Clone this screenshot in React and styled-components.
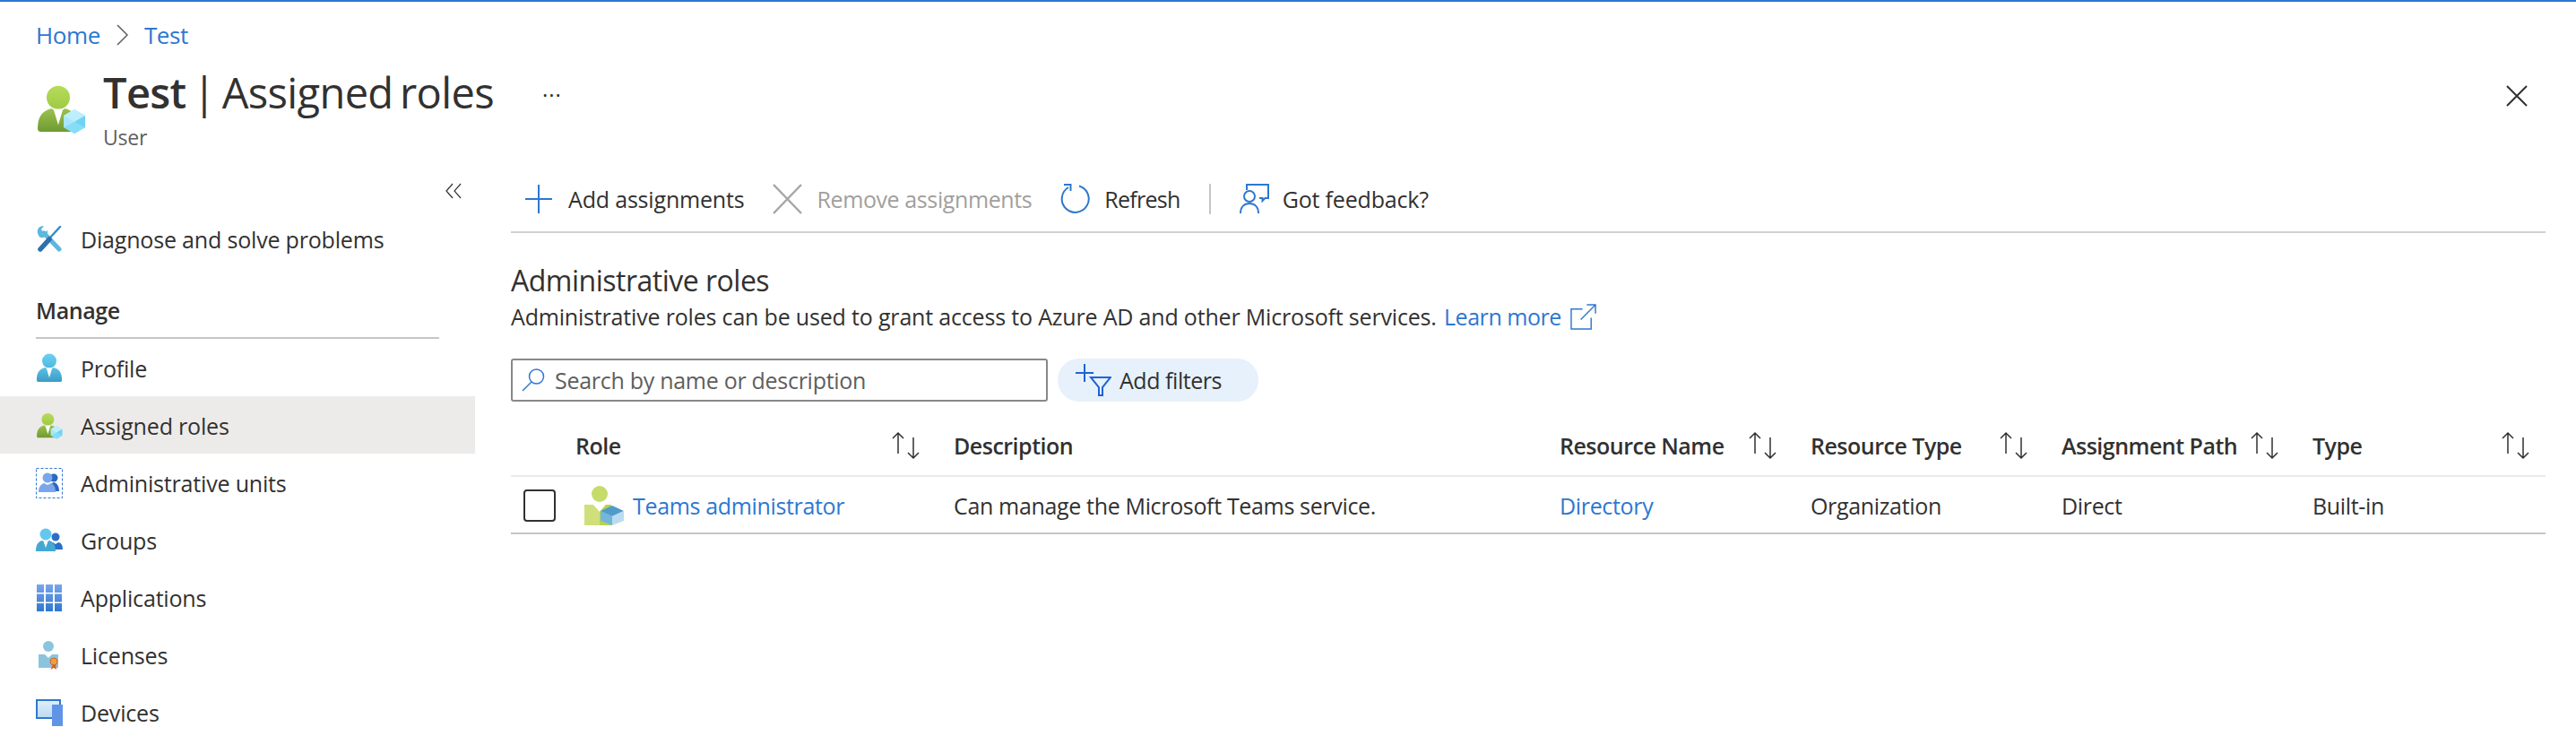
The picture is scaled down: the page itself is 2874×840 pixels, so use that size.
import styled, { createGlobalStyle } from "styled-components";

const GlobalStyle = createGlobalStyle`
  html, body {
    margin: 0;
    padding: 0;
    background: #fff;
    color: #323130;
    font-family: "Open Sans", "Noto Sans", sans-serif;
    font-size: 25px;
    letter-spacing: -0.18px;
  }
`;

const BLUE = "#2e77d0";

const Page = styled.div`
  width: 2874px;
  height: 840px;
  overflow: hidden;
  border-top: 2px solid ${BLUE};
  box-sizing: border-box;
`;

const Header = styled.header`
  height: 188px;
  padding: 0 54px 0 40px;
  box-sizing: border-box;
`;

const Breadcrumb = styled.nav`
  height: 74px;
  display: flex;
  align-items: center;
  gap: 18px;
`;

const Crumb = styled.a`
  color: ${BLUE};
  font-size: 26px;
  letter-spacing: -0.4px;
`;

const TitleRow = styled.div`
  display: flex;
  align-items: flex-start;
`;

const TitleIcon = styled.div`
  width: 75px;
  height: 56px;
  margin-top: 19px;
  flex: none;
`;

const TitleBlock = styled.div`
  display: flex;
  flex-direction: column;
  margin-top: -2px;
`;

const Title = styled.h1`
  margin: 0;
  font-size: 47px;
  line-height: 58px;
  font-weight: 400;
  letter-spacing: -0.65px;
  word-spacing: -4px;
  b {
    font-weight: 600;
  }
`;

const Subtitle = styled.div`
  font-size: 23px;
  line-height: 34px;
  color: #605e5c;
  margin-top: 4px;
`;

const More = styled.div`
  margin: 0 0 0 54px;
  line-height: 60px;
  font-size: 24px;
  color: #323130;
  letter-spacing: 1px;
`;

const Close = styled.div`
  margin-left: auto;
  margin-top: 16px;
`;

const Body = styled.div`
  display: flex;
  align-items: flex-start;
`;

const Sidebar = styled.aside`
  width: 530px;
  flex: none;
`;

const Collapse = styled.div`
  height: 45px;
  display: flex;
  justify-content: flex-end;
  align-items: center;
  padding-right: 15px;
`;

const NavRow = styled.div`
  height: 64px;
  box-sizing: border-box;
  display: flex;
  align-items: center;
  gap: 20px;
  padding: ${(p) => (p.$managed ? "2px" : "0")} 0 0 40px;
  background: ${(p) => (p.$active ? "#edebe9" : "transparent")};
`;

const NavIcon = styled.span`
  width: 30px;
  height: 34px;
  flex: none;
  display: flex;
  align-items: center;
  justify-content: center;
`;

const SectionHead = styled.div`
  margin: 17px 40px 0;
  height: 62px;
  line-height: 60px;
  font-weight: 600;
  letter-spacing: -0.4px;
  box-sizing: border-box;
  border-bottom: 2px solid #c8c6c4;
`;

const Main = styled.main`
  flex: 1;
  padding: 0 34px 0 40px;
  min-width: 0;
`;

const Toolbar = styled.div`
  height: 70px;
  box-sizing: border-box;
  padding: 0 0 5px 16px;
  border-bottom: 2px solid #d2d0ce;
  display: flex;
  align-items: center;
  gap: 32px;
`;

const ToolButton = styled.div`
  display: flex;
  align-items: center;
  gap: ${(p) => p.$gap || 16}px;
  letter-spacing: ${(p) => p.$track || -0.18}px;
  color: ${(p) => (p.$disabled ? "#a19f9d" : "#323130")};
`;

const ToolSep = styled.div`
  width: 2px;
  height: 34px;
  background: #c8c6c4;
`;

const RoleTitle = styled.h2`
  margin: 31px 0 0;
  font-size: 32px;
  line-height: 44px;
  font-weight: 400;
  letter-spacing: -0.5px;
`;

const RoleDesc = styled.p`
  margin: 0;
  line-height: 36px;
  display: flex;
  align-items: center;
  gap: 10px;
`;

const Link = styled.a`
  color: ${BLUE};
`;

const LearnMore = styled(Link)`
  letter-spacing: -0.45px;
  margin-left: 2px;
`;

const FilterRow = styled.div`
  margin-top: 29px;
  display: flex;
  align-items: stretch;
  gap: 11px;
  height: 48px;
`;

const SearchBox = styled.div`
  width: 599px;
  box-sizing: border-box;
  border: 2px solid #8a8886;
  border-radius: 3px;
  display: flex;
  align-items: center;
  gap: 11px;
  padding-left: 10px;
  color: #605e5c;
  letter-spacing: -0.28px;
`;

const FilterPill = styled.div`
  width: 224px;
  box-sizing: border-box;
  background: #e6f1fb;
  border-radius: 24px;
  display: flex;
  align-items: center;
  gap: 9px;
  padding-left: 20px;
  letter-spacing: -0.45px;
`;

const TableGrid = styled.div`
  margin-top: 16px;
  display: grid;
  grid-template-columns: 72px 422px 676px 280px 280px 280px 260px;
`;

const HeadCell = styled.div`
  height: 68px;
  box-sizing: border-box;
  border-bottom: 2px solid #edebe9;
  display: flex;
  align-items: center;
  justify-content: space-between;
  padding-right: ${(p) => (p.$last ? "16px" : "36px")};
  font-weight: 600;
  letter-spacing: -0.5px;
`;

const Cell = styled.div`
  height: 64px;
  box-sizing: border-box;
  border-bottom: 2px solid #c8c6c4;
  display: flex;
  align-items: center;
  gap: 10px;
  padding-left: ${(p) => p.$pad || 0}px;
  padding-top: 2px;
  letter-spacing: -0.34px;
`;

const Checkbox = styled.span`
  width: 36px;
  height: 36px;
  box-sizing: border-box;
  border: 2px solid #323130;
  border-radius: 4px;
`;

const SortIcon = () => (
  <svg width="34" height="34" viewBox="0 0 34 34" fill="none" stroke="#323130" strokeWidth="1.5">
    <path d="M8 26V3M2 9l6-6 6 6" />
    <path d="M25 8v23M19 25l6 6 6-6" />
  </svg>
);

const Person = ({ id, top, bottom, headTop, headBottom }) => (
  <g>
    <defs>
      <linearGradient id={id + "h"} x1="0" y1="0" x2="0" y2="1">
        <stop offset="0" stopColor={headTop} />
        <stop offset="1" stopColor={headBottom} />
      </linearGradient>
      <linearGradient id={id + "b"} x1="0" y1="0" x2="0" y2="1">
        <stop offset="0" stopColor={top} />
        <stop offset="1" stopColor={bottom} />
      </linearGradient>
    </defs>
    <circle cx="16" cy="9" r="8.500" fill={`url(#${id}h)`} />
    <path d="M1 32c0-9 3-13 10-15l5 3 5-3c7 2 10 6 10 15 0 1-1 2-2 2H3c-1 0-2-1-2-2z" fill={`url(#${id}b)`} />
    <path d="M12.500 17.500h7L16 29z" fill="#fff" />
  </g>
);

const Cube = ({ x, y, s }) => (
  <g transform={`translate(${x} ${y}) scale(${s})`}>
    <path d="M12 0l12 7v13l-12 7-12-7V7z" fill="#a8e6fb" />
    <path d="M12 0l12 7-12 7-12-7z" fill="#bdeefc" />
    <path d="M24 7v13l-12 7V14z" fill="#6fd3f3" />
    <path d="M0 20l12-6 12 6-12 7z" fill="#86ddf8" />
  </g>
);

const GREEN = { top: "#9cc24c", bottom: "#6f9a33", headTop: "#b5dc5a", headBottom: "#9fca45" };
const CYAN = { top: "#5cc0e4", bottom: "#3b9cc4", headTop: "#6dd0f2", headBottom: "#4fb8e0" };

const RoleUserIcon = ({ id, size }) => (
  <svg width={size} height={size} viewBox="0 0 56 56">
    <g transform="translate(0.5 0) scale(1.53)">
      <Person id={id} {...GREEN} />
    </g>
    <Cube x="31" y="27" s="1" />
  </svg>
);

const ProfileIcon = () => (
  <svg width="30" height="34" viewBox="0 0 32 36">
    <Person id="profile" {...CYAN} />
  </svg>
);

const AdminUnitsIcon = () => (
  <svg width="30" height="34" viewBox="0 0 30 34">
    <rect x="0.5" y="0.5" width="29" height="33" fill="none" stroke="#2e77d0" strokeDasharray="3 2" />
    <circle cx="20" cy="11" r="4.5" fill="#2b68c0" />
    <path d="M15 26c0-6 2-9 5-10 4 1 6 5 6 10z" fill="#2b68c0" />
    <circle cx="13" cy="11" r="5.5" fill="#7aa6ea" />
    <path d="M3 27c0-6 3-9 6-10l4 2 4-2c3 1 5 4 5 10z" fill="#7aa6ea" />
  </svg>
);

const GroupsIcon = () => (
  <svg width="30" height="28" viewBox="0 0 30 28">
    <circle cx="22" cy="10" r="4.5" fill="#2b6fc8" />
    <path d="M15 24c0-5 2-8 4-8l3 2 3-2c3 0 5 3 5 8z" fill="#2b6fc8" />
    <circle cx="11" cy="7" r="6.5" fill="#62c8ee" />
    <path d="M0 26c0-8 3-11 7-12l4 2 4-2c4 1 7 4 7 12z" fill="#45a8d2" />
    <path d="M8.5 15h5L11 22z" fill="#fff" />
  </svg>
);

const AppsIcon = () => (
  <svg width="28" height="30" viewBox="0 0 28 30">
    <defs>
      <linearGradient id="apps" x1="0" y1="0" x2="0" y2="1">
        <stop offset="0" stopColor="#7aa6ea" />
        <stop offset="1" stopColor="#2e77d0" />
      </linearGradient>
    </defs>
    <path d="M0 0h8v9H0zM10 0h8v9h-8zM20 0h8v9h-8zM0 10.500h8v9H0zM10 10.500h8v9h-8zM20 10.500h8v9h-8zM0 21h8v9H0zM10 21h8v9h-8zM20 21h8v9h-8z" fill="url(#apps)" />
  </svg>
);

const LicensesIcon = () => (
  <svg width="24" height="32" viewBox="0 0 24 32">
    <circle cx="11" cy="6" r="6" fill="#8cc4de" />
    <path d="M0 15h7l4 4 4-4h7v15H0z" fill="#8cc4de" />
    <path d="M16 26l-2.500 6 3.500-2 3 2-1-6z" fill="#d2632c" />
    <circle cx="17" cy="23" r="4" fill="#e9a13b" stroke="#d2632c" strokeWidth="1" />
  </svg>
);

const DevicesIcon = () => (
  <svg width="30" height="30" viewBox="0 0 30 30">
    <defs>
      <linearGradient id="screen" x1="0" y1="0" x2="0" y2="1">
        <stop offset="0" stopColor="#e1effa" />
        <stop offset="1" stopColor="#bcd8f2" />
      </linearGradient>
    </defs>
    <rect x="1" y="1" width="26" height="20" fill="url(#screen)" stroke="#2e77d0" strokeWidth="2" />
    <rect x="18" y="6" width="12" height="24" fill="#5f94e6" />
  </svg>
);

const ToolsIcon = () => (
  <svg width="28" height="30" viewBox="0 0 28 30" fill="none" strokeLinecap="round">
    <path d="M8 8l17 18" stroke="#5cb8dc" strokeWidth="5" />
    <path d="M1 8C0 3 3 0 8 0L5 4l3 4 4-3c1 5-3 9-7 8-2 0-3-2-4-5z" fill="#5cb8dc" />
    <path d="M26 1L15 13" stroke="#3a8fc8" strokeWidth="2.500" />
    <path d="M14 15L4 26" stroke="#2e6fb0" strokeWidth="5.500" />
  </svg>
);

const PlusIcon = () => (
  <svg width="30" height="32" viewBox="0 0 30 32" fill="none" stroke={BLUE} strokeWidth="2">
    <path d="M15 0v32M0 16h30" />
  </svg>
);

const RemoveIcon = () => (
  <svg width="33" height="34" viewBox="0 0 33 34" fill="none" stroke="#a6a6a6" strokeWidth="2.500">
    <path d="M1 1l31 32M32 1L1 33" />
  </svg>
);

const RefreshIcon = () => (
  <svg width="33" height="33" viewBox="0 0 33 33" fill="none" stroke={BLUE} strokeWidth="2">
    <path d="M21 2.500A15 15 0 1 1 9 4" />
    <path d="M4 1h7.500v7" />
  </svg>
);

const FeedbackIcon = () => (
  <svg width="34" height="33" viewBox="0 0 34 33" fill="none" stroke={BLUE} strokeWidth="2">
    <path d="M8 7V1h24v15h-3.500l-3 3v-3H22" />
    <circle cx="11" cy="14" r="6" />
    <path d="M1 33c0-7 4-11 10-11s10 4 10 11" />
  </svg>
);

const SearchIcon = () => (
  <svg width="26" height="26" viewBox="0 0 26 26" fill="none" stroke={BLUE} strokeWidth="1.500">
    <circle cx="16.500" cy="9" r="8" />
    <path d="M11 15L1 25" />
  </svg>
);

const FilterIcon = () => (
  <svg width="40" height="36" viewBox="0 0 40 36" fill="none" stroke="#1f63d8" strokeWidth="2">
    <path d="M10 0v20M0 10h20" />
    <path d="M17 15h22l-9 11v9h-4V26z" />
  </svg>
);

const ExternalIcon = () => (
  <svg width="29" height="29" viewBox="0 0 30 30" fill="none" stroke={BLUE} strokeWidth="1.500">
    <path d="M14 6H1v23h23V16" />
    <path d="M19 1h10v10M29 1L12 18" />
  </svg>
);

const navItems = [
  { label: "Profile", icon: <ProfileIcon /> },
  { label: "Assigned roles", icon: <RoleUserIcon id="nav" size={31} />, active: true },
  { label: "Administrative units", icon: <AdminUnitsIcon /> },
  { label: "Groups", icon: <GroupsIcon /> },
  { label: "Applications", icon: <AppsIcon /> },
  { label: "Licenses", icon: <LicensesIcon /> },
  { label: "Devices", icon: <DevicesIcon /> },
];

const columns = ["Resource Name", "Resource Type", "Assignment Path", "Type"];

export default function App() {
  return (
    <Page>
      <GlobalStyle />
      <Header>
        <Breadcrumb>
          <Crumb>Home</Crumb>
          <svg width="13" height="24" viewBox="0 0 13 24" fill="none" stroke="#605e5c" strokeWidth="1.500">
            <path d="M1 1l11 11L1 23" />
          </svg>
          <Crumb>Test</Crumb>
        </Breadcrumb>
        <TitleRow>
          <TitleIcon>
            <RoleUserIcon id="title" size={56} />
          </TitleIcon>
          <TitleBlock>
            <Title>
              <b>Test</b> | Assigned roles
            </Title>
            <Subtitle>User</Subtitle>
          </TitleBlock>
          <More>···</More>
          <Close>
            <svg width="24" height="24" viewBox="0 0 24 24" fill="none" stroke="#323130" strokeWidth="2">
              <path d="M1 1l22 22M23 1L1 23" />
            </svg>
          </Close>
        </TitleRow>
      </Header>
      <Body>
        <Sidebar>
          <Collapse>
            <svg width="18" height="18" viewBox="0 0 18 18" fill="none" stroke="#323130" strokeWidth="1.200">
              <path d="M8 1L1 9l7 8M17 1l-7 8 7 8" />
            </svg>
          </Collapse>
          <NavRow>
            <NavIcon>
              <ToolsIcon />
            </NavIcon>
            Diagnose and solve problems
          </NavRow>
          <SectionHead>Manage</SectionHead>
          {navItems.map((item) => (
            <NavRow key={item.label} $active={item.active} $managed>
              <NavIcon>{item.icon}</NavIcon>
              {item.label}
            </NavRow>
          ))}
        </Sidebar>
        <Main>
          <Toolbar>
            <ToolButton $gap={18}>
              <PlusIcon />
              Add assignments
            </ToolButton>
            <ToolButton $disabled $track={-0.4}>
              <RemoveIcon />
              Remove assignments
            </ToolButton>
            <ToolButton $track={-0.7}>
              <RefreshIcon />
              Refresh
            </ToolButton>
            <ToolSep />
            <ToolButton $gap={14}>
              <FeedbackIcon />
              Got feedback?
            </ToolButton>
          </Toolbar>
          <RoleTitle>Administrative roles</RoleTitle>
          <RoleDesc>
            <span>
              Administrative roles can be used to grant access to Azure AD and other Microsoft services.{" "}
              <LearnMore>Learn more</LearnMore>
            </span>
            <ExternalIcon />
          </RoleDesc>
          <FilterRow>
            <SearchBox>
              <SearchIcon />
              Search by name or description
            </SearchBox>
            <FilterPill>
              <FilterIcon />
              Add filters
            </FilterPill>
          </FilterRow>
          <TableGrid>
            <HeadCell />
            <HeadCell>
              Role
              <SortIcon />
            </HeadCell>
            <HeadCell>Description</HeadCell>
            {columns.map((name, i) => (
              <HeadCell key={name} $last={i === columns.length - 1}>
                {name}
                <SortIcon />
              </HeadCell>
            ))}
            <Cell $pad={14}>
              <Checkbox />
            </Cell>
            <Cell $pad={10}>
              <svg width="44" height="44" viewBox="0 0 44 44">
                <circle cx="17" cy="9" r="9" fill="#c5dc6b" />
                <path d="M0 21h10l7 8 7-8h6v23H0z" fill="#cfe07a" />
                <path d="M17 29l7-8h6v23H17z" fill="#b9d24f" />
                <path d="M31 22l13 6-13 6-13-6z" fill="#4f9ccb" />
                <path d="M18 28l13 6v10l-13-5z" fill="#74b5de" />
                <path d="M44 28l-13 6v10l13-5z" fill="#bbdcef" />
              </svg>
              <Link>Teams administrator</Link>
            </Cell>
            <Cell>Can manage the Microsoft Teams service.</Cell>
            <Cell>
              <Link>Directory</Link>
            </Cell>
            <Cell>Organization</Cell>
            <Cell>Direct</Cell>
            <Cell>Built-in</Cell>
          </TableGrid>
        </Main>
      </Body>
    </Page>
  );
}
